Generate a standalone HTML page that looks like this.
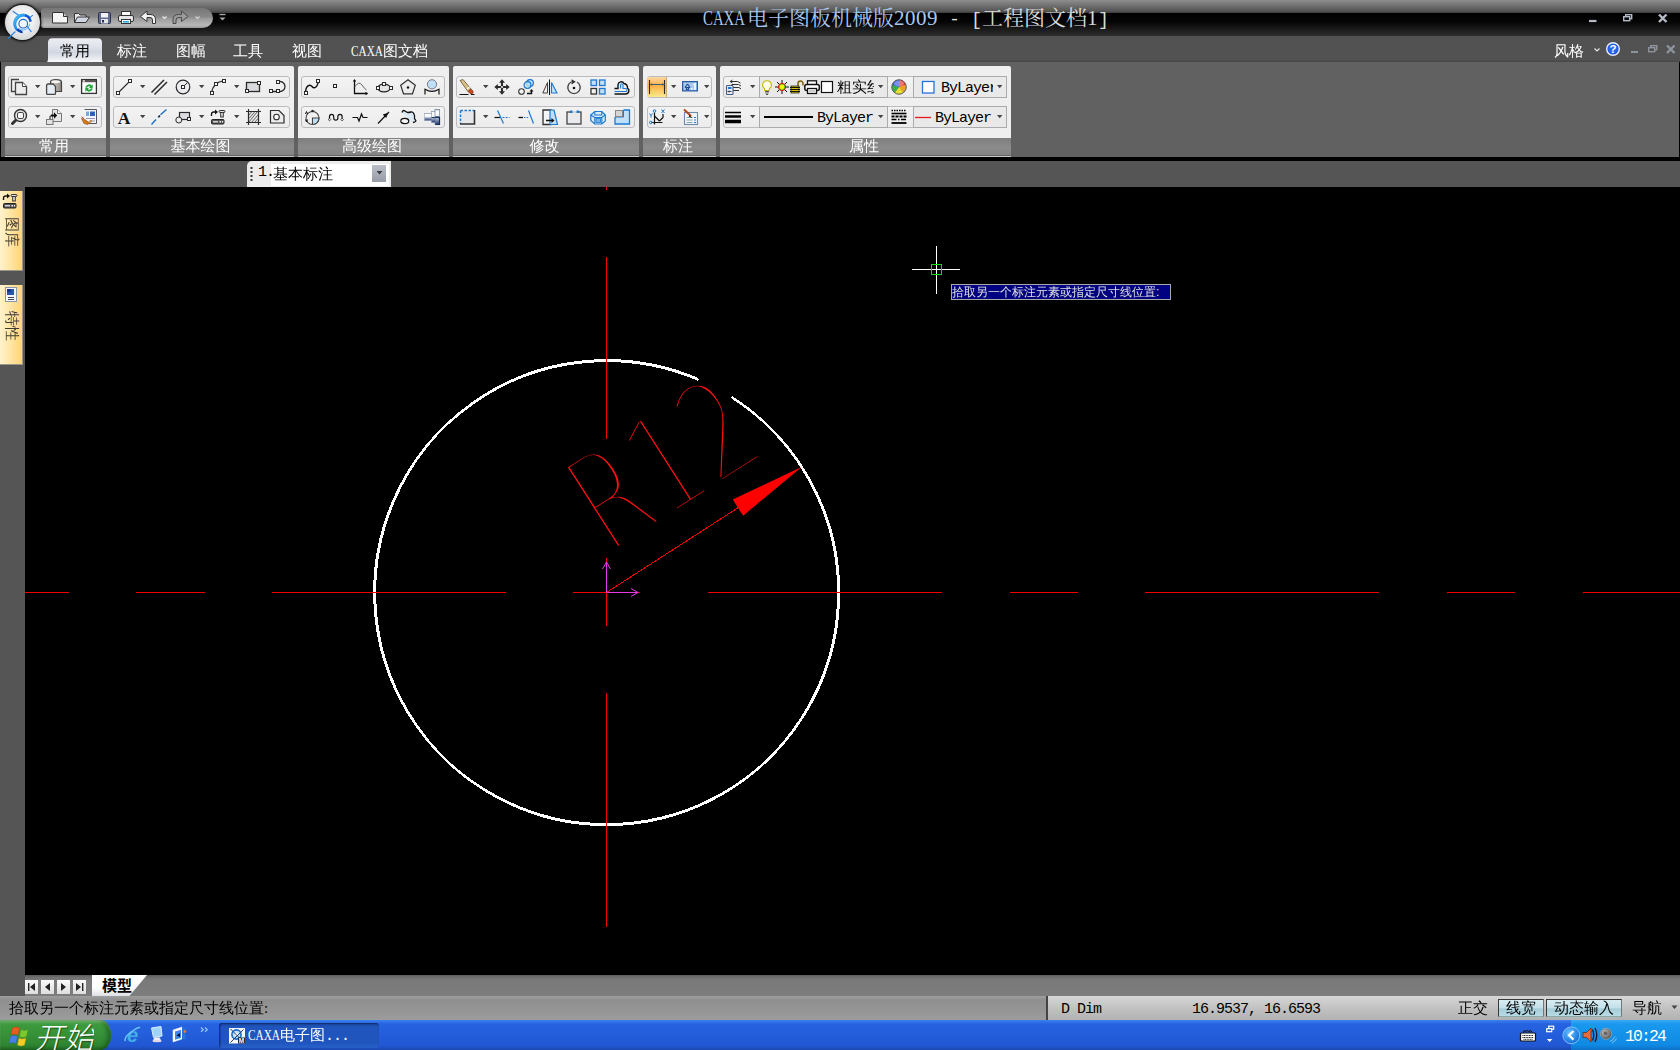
<!DOCTYPE html>
<html lang="zh-CN">
<head>
<meta charset="utf-8">
<title>CAXA电子图板机械版2009 - [工程图文档1]</title>
<style>
html,body{margin:0;padding:0;background:#555;}
body{width:1680px;height:1050px;position:relative;overflow:hidden;font-family:"Liberation Serif","WenQuanYi Zen Hei",serif;font-size:15px;color:#000;}
.abs{position:absolute;}
div,span,svg{box-sizing:border-box;}
svg{position:absolute;overflow:visible;}
/* ---------- title bar ---------- */
#title{left:0;top:0;width:1680px;height:36px;background:linear-gradient(#000,#000 13px,#050505 22px,#2e2e2e 36px);}
#titletop{left:0;top:0;width:1680px;height:13px;background:linear-gradient(#8e8e8e,#6e6e6e 6px,#555 11px,#3a3a3a 13px);}
#ttext{left:703px;top:5px;height:26px;line-height:26px;font-size:21px;white-space:nowrap;font-family:"Liberation Serif","Noto Serif CJK SC",serif;color:#a9c6ee;}
#ttext .l{font-family:"Liberation Mono",monospace;font-size:18.33px;}
#ttext .d{letter-spacing:.5px;}
#ttext .w{color:#dcdcdc;}
/* ---------- menu bar ---------- */
#menu{left:0;top:36px;width:1680px;height:26px;background:linear-gradient(#515151,#525252 24px,#484848 25px);}
.mi{top:41px;height:20px;line-height:20px;font-size:15px;color:#fff;white-space:nowrap;}
#tab1{left:47px;top:38px;width:57px;height:25px;border-radius:5px 5px 0 0;background:linear-gradient(#eceef3,#dfe2ea 45%,#d3d7e0 55%,#eef0f4);}
/* ---------- ribbon ---------- */
#ribbon{left:0;top:62px;width:1680px;height:96px;background:#616161;}
#ribline{left:0;top:157px;width:1680px;height:4px;background:#000;}
#ribl{left:0;top:62px;width:1px;height:96px;background:#000;}
#ribr{left:1679px;top:62px;width:1px;height:96px;background:#000;}
.panel{top:66px;height:91px;background:#efefef;border-radius:2px 2px 0 0;overflow:hidden;}
.panel .cap{position:absolute;left:0;right:0;top:72px;height:19px;background:linear-gradient(#7e7e7e,#8b8b8b 9px,#838383 17px,#666 17px,#666 18px,#c6c6c6 18px);color:#fff;font-size:15px;line-height:17px;text-align:center;padding-right:3px;}
.grp{height:22px;border:1px solid #babcc0;border-radius:3px;background:linear-gradient(#f3f3f3,#ececec);}
/* ---------- toolbar strip ---------- */
#strip{left:0;top:161px;width:1680px;height:26px;background:#555;}
#side{left:0;top:187px;width:25px;height:809px;background:#555;}
#canvas{left:25px;top:187px;width:1655px;height:788px;background:#000;}
/* ---------- bottom ---------- */
#tabs{left:25px;top:975px;width:1655px;height:21px;background:linear-gradient(#5a5a5a,#6e6e6e 2px,#797979 5px,#7d7d7d);}
#status{left:0;top:996px;width:1680px;height:24px;background:linear-gradient(#9e9e9e,#8f8f8f 4px,#939393 12px,#9c9c9c);}
#taskbar{left:0;top:1020px;width:1680px;height:30px;background:linear-gradient(#3c81f0,#2663e0 4px,#245edb 14px,#2157d2 26px,#1b48b0);}

/* bottom items */
.nb{top:980px;width:13px;height:14px;background:linear-gradient(#fafafa,#dedede);}
#mtab{left:92px;top:975px;width:55px;height:21px;background:linear-gradient(#fff,#fff 60%,#dcdfe6);clip-path:polygon(0 0,100% 0,68% 100%,0 100%);}
#mtabt{left:102px;top:976px;font-size:15px;line-height:20px;font-weight:bold;color:#000;font-family:"Liberation Sans","Noto Sans CJK SC",sans-serif;}
#stmsg{left:9px;top:998px;font-size:15px;line-height:20px;color:#000;white-space:nowrap;}
#stright{left:1046px;top:996px;width:634px;height:24px;background:linear-gradient(#d6d6d6,#c2c2c2 50%,#b2b2b2);border-left:2px solid #444;}
.st{top:998px;font-size:15px;line-height:20px;color:#000;white-space:nowrap;}
.sbtn{top:999px;height:18px;border:1px solid #3a3a3a;border-right-color:#777;border-bottom-color:#8aa;background:linear-gradient(#d8ecf2,#c4e0ea 50%,#a4ccd8 55%,#b8dce6);}
#start{left:0;top:1020px;width:111px;height:30px;border-radius:0 10px 10px 0/0 15px 15px 0;background:linear-gradient(#5db45c,#3c9a3c 18%,#358f36 55%,#2f8530 85%,#246c26);box-shadow:inset -3px 0 5px rgba(0,40,0,.45), inset 0 2px 2px rgba(255,255,255,.25);}
#startt{left:34px;top:1020px;height:30px;overflow:hidden;font-size:30px;line-height:37px;color:#fff;font-style:italic;font-family:"Liberation Sans","Noto Sans CJK SC",sans-serif;font-weight:300;text-shadow:1px 1px 1px rgba(0,40,0,.55);white-space:nowrap;}
#tbtn{left:219px;top:1023px;width:160px;height:25px;border-radius:3px;background:linear-gradient(#1d4fae,#1f55bd 20%,#1f55bd 80%,#2a62cc);box-shadow:inset 1px 1px 2px rgba(0,0,30,.55);}
#tbtnt{left:248px;top:1025px;font-size:15px;line-height:20px;color:#fff;white-space:nowrap;}
#tray{left:1571px;top:1020px;width:109px;height:30px;background:linear-gradient(#3aaaf4,#1a98ee 4px,#1392ea 14px,#108ae4 25px,#0c70c8);}
#clock{left:1625px;top:1027px;font-size:16.5px;line-height:20px;color:#fff;white-space:nowrap;font-family:"Liberation Mono",monospace;letter-spacing:-1.9px;}

/* combo + side tabs */
#combo{left:247px;top:161px;width:144px;height:26px;background:#ececec;border-radius:5px 0 0 0;}
#combow{left:271px;top:164px;width:118px;height:22px;background:#fff;}
#combob{left:372px;top:165px;width:14px;height:17px;background:linear-gradient(#b9bdc6,#a9adb7 50%,#989ca7);}
.ct{top:164px;font-size:15px;line-height:20px;color:#000;white-space:nowrap;}
.stab{left:0;width:23px;height:80px;background:linear-gradient(90deg,#fff2cc,#ffe6a6 45%,#ffd37c);border-right:1px solid #9a958a;border-bottom:1px solid #9a958a;}
.stt{font-size:15px;line-height:15px;height:15px;color:#3e3c32;white-space:nowrap;transform-origin:0 0;transform:rotate(90deg);}

/* top items */
#qat{left:41px;top:8px;width:172px;height:20px;border-radius:3px 10px 10px 3px/3px 10px 10px 3px;background:linear-gradient(#767676,#8a8a8a 46%,#9e9e9e 54%,#b8b8b8 86%,#989898);}
#appbtn{left:4.500px;top:4.800px;width:35px;height:35px;border-radius:50%;background:radial-gradient(circle at 50% 42%,#fdfdfd,#f0f0f2 40%,#d9dadc 70%,#b4b6ba 92%,#8d9096);box-shadow:0 0 0 1.200px #1c1c1c,0 0 3px 1px #000;}

.cmb{height:22px;border:1px solid #a9abae;background:#e9e9e9;}
.cbt{font-size:15px;line-height:20px;height:20px;color:#000;white-space:nowrap;font-family:"Liberation Serif","WenQuanYi Zen Hei",serif;}
.sq{display:inline-block;transform-origin:0 50%;transform:scaleX(.706);white-space:nowrap;vertical-align:top;}
.mo{font-family:"Liberation Mono",monospace;font-size:15px;letter-spacing:-1px;}
</style>
</head>
<body>
<!-- TITLE BAR -->
<div id="title" class="abs"></div>
<div id="titletop" class="abs"></div>
<div id="ttext" class="abs"><span class="sq" style="width:44px">CAXA</span>电子图板机械版<span class="d">2009</span><span class="w"><span class="l"> - [</span>工程图文档<span class="d">1</span><span class="l">]</span></span></div>

<div id="qat" class="abs"></div>

<svg class="abs" style="left:41px;top:8px" width="190" height="20" viewBox="41 8 190 20">
<!-- new -->
<path d="M52.5 12.5h11l4 4v6.5h-15z" fill="#f4f4f4" stroke="#333" stroke-width="1"/><path d="M63.5 12.5v4h4" fill="#ccc" stroke="#333" stroke-width="1"/>
<!-- open -->
<path d="M74.5 22.5v-9h4l1.5 1.5h6v2" fill="#e8e8e8" stroke="#333" stroke-width="1"/><path d="M74.5 22.5l3-5.5h12l-3.5 5.5z" fill="#cfd6e2" stroke="#333" stroke-width="1"/>
<!-- save -->
<rect x="98.500" y="12.500" width="12" height="11" rx="1" fill="#636c8e" stroke="#2e3450" stroke-width="1"/><rect x="101" y="13" width="7" height="4.500" fill="#f2f2f2"/><rect x="101" y="19" width="7" height="4.500" fill="#dfe3ea"/><rect x="102" y="20" width="2" height="2.500" fill="#2a3350"/>
<!-- print -->
<rect x="121.500" y="11.500" width="9" height="4" fill="#fafafa" stroke="#333"/><rect x="118.500" y="15.500" width="15" height="6" rx="1.500" fill="#e6e6e6" stroke="#333"/><rect x="121.500" y="19.500" width="9" height="4" fill="#fff" stroke="#333"/><rect x="123" y="21" width="6" height="1.600" fill="#28a8e8"/>
<!-- undo -->
<path d="M140.500 16.500l6.500-5.500v3.500h3q5.500 0 5.500 5v4h-3v-3.500q0-2.500-2.500-2.500h-3v4z" fill="#f2f2f2" stroke="#333" stroke-width="1" stroke-linejoin="round"/>
<path d="M162.500 16.500l2 2l2-2" fill="none" stroke="#e8e8e8" stroke-width="1.200"/>
<!-- redo -->
<path d="M188 16.500l-6.500-5.500v3.500h-3q-5.500 0-5.500 5v4h3v-3.500q0-2.500 2.500-2.500h3v4z" fill="#9a9a9a" stroke="#4a4a4a" stroke-width="1" stroke-linejoin="round"/>
<path d="M195.500 16.500l2 2l2-2" fill="none" stroke="#d0d0d0" stroke-width="1.200"/>
<!-- customize -->
<path d="M219.500 14.500h6" stroke="#a8a8a8" stroke-width="1.400"/><path d="M219.500 17.500h6l-3 3z" fill="#a8a8a8"/>
</svg>
<!-- window buttons -->
<svg class="abs" style="left:1580px;top:10px" width="100" height="16" viewBox="1580 10 100 16"><g fill="none" stroke="#b4bac6">
<path d="M1589 21h7.500" stroke-width="2.200"/>
<rect x="1625.700" y="14.700" width="6" height="4" stroke-width="1.400"/><rect x="1623.700" y="16.700" width="6" height="4" stroke-width="1.400" fill="#0a0a0a"/>
<path d="M1659 14.500l7.500 7.500M1666.500 14.500l-7.500 7.500" stroke-width="2.400"/></g></svg>

<!-- MENU BAR -->
<div id="menu" class="abs"></div>
<svg class="abs" style="left:44px;top:36px" width="64" height="28" viewBox="44 36 64 28"><defs><linearGradient id="tg" x1="0" y1="0" x2="0" y2="1"><stop offset="0" stop-color="#eceef3"/><stop offset=".3" stop-color="#e2e5ec"/><stop offset=".58" stop-color="#d1d6e1"/><stop offset=".8" stop-color="#e6e8ee"/><stop offset="1" stop-color="#fbfbfd"/></linearGradient></defs><path d="M46 62.400Q48 62 48 59.500V42.500Q48 38.200 52.500 38.200H97.500Q102 38.200 102 42.500V59.500Q102 62 104 62.400z" fill="url(#tg)"/></svg>
<div class="abs mi" style="left:60px;color:#000">常用</div>
<div class="abs mi" style="left:117px">标注</div>
<div class="abs mi" style="left:176px">图幅</div>
<div class="abs mi" style="left:233px">工具</div>
<div class="abs mi" style="left:292px">视图</div>
<div class="abs mi" style="left:351px"><span class="sq" style="width:32px;transform:scaleX(.753)">CAXA</span>图文档</div>
<div class="abs mi" style="left:1554px">风格</div>

<div id="appbtn" class="abs"></div>
<svg class="abs" style="left:0;top:0" width="46" height="46" viewBox="0 0 46 46"><defs><linearGradient id="lg1" x1="0" y1="0" x2="1" y2="1"><stop offset="0" stop-color="#5ccaf8"/><stop offset=".5" stop-color="#1f86e6"/><stop offset="1" stop-color="#0a3fb0"/></linearGradient></defs>
<g fill="none" stroke="#2a88e2" stroke-width="1.200" stroke-linecap="round"><path d="M13.200 11.400L18.900 15.400M32.500 15.400L29 18.400M27.200 26.300L31.100 31.600M15.200 31.800L8.300 38.200"/></g>
<path d="M30.500 17.200A9.800 9.800 0 1 0 22.500 33.200Q21.500 31.800 19.500 30.800A7.200 7.200 0 0 1 28.500 18.200z" fill="url(#lg1)"/>
<path d="M25 14.500Q30.500 15 31.800 21.500L29.300 22Q28.800 17.500 25 16.500z" fill="#1457c8"/>
<path d="M16.500 29Q18.500 32.500 22.800 33.200L22.300 30.800Q19.500 30.500 18.500 28.500z" fill="#0b3aa6"/>
<circle cx="23.200" cy="23.700" r="4.300" fill="#f4f6fa" stroke="#1a66cc" stroke-width="1.100"/><circle cx="23.200" cy="23.700" r="6.300" fill="none" stroke="#49a6f0" stroke-width=".9" stroke-dasharray="14 26"/></svg>
<svg class="abs" style="left:1590px;top:40px" width="90" height="18" viewBox="1590 40 90 18">
<path d="M1594.500 48.500l2.500 2.500l2.500-2.500" fill="none" stroke="#e8e8e8" stroke-width="1.200"/>
<circle cx="1613" cy="49" r="6.300" fill="#1f55d8" stroke="#e6eeff" stroke-width="1.400"/><circle cx="1613" cy="49" r="4.600" fill="#2f6cf0" opacity=".6"/>
<text x="1613" y="53.300" text-anchor="middle" font-family="'Liberation Sans',sans-serif" font-weight="bold" font-size="11.500" fill="#fff">?</text>
<g fill="none" stroke="#8e949e"><path d="M1631 52h7" stroke-width="2"/>
<rect x="1650.700" y="45.700" width="6" height="4" stroke-width="1.400"/><rect x="1648.700" y="47.700" width="6" height="4" stroke-width="1.400" fill="#4f4f4f"/>
<path d="M1667 45.500l7.500 7.500M1674.500 45.500l-7.500 7.500" stroke-width="2.400"/></g></svg>
<!-- RIBBON -->
<div id="ribbon" class="abs"></div>
<div id="ribline" class="abs"></div><div id="ribl" class="abs"></div><div id="ribr" class="abs"></div>
<div class="abs panel" style="left:5px;width:101px"><div class="cap">常用</div></div>
<div class="abs panel" style="left:110px;width:184px"><div class="cap">基本绘图</div></div>
<div class="abs panel" style="left:298px;width:151px"><div class="cap">高级绘图</div></div>
<div class="abs panel" style="left:453px;width:186px"><div class="cap">修改</div></div>
<div class="abs panel" style="left:643px;width:73px"><div class="cap">标注</div></div>
<div class="abs panel" style="left:720px;width:291px"><div class="cap">属性</div></div>
<div class="abs grp" style="left:8px;top:76px;width:94px"></div>
<div class="abs grp" style="left:8px;top:106px;width:94px"></div>
<div class="abs grp" style="left:113px;top:76px;width:177px"></div>
<div class="abs grp" style="left:113px;top:106px;width:177px"></div>
<div class="abs grp" style="left:301px;top:76px;width:144px"></div>
<div class="abs grp" style="left:301px;top:106px;width:144px"></div>
<div class="abs grp" style="left:456px;top:76px;width:179px"></div>
<div class="abs grp" style="left:456px;top:106px;width:179px"></div>
<div class="abs grp" style="left:647px;top:76px;width:65px"></div>
<div class="abs grp" style="left:647px;top:106px;width:65px"></div>
<div class="abs grp" style="left:723px;top:76px;width:284px"></div>
<div class="abs cmb" style="left:759px;top:76px;width:129px"></div>
<div class="abs cmb" style="left:913px;top:76px;width:94px"></div>
<div class="abs grp" style="left:723px;top:106px;width:284px"></div>
<div class="abs cmb" style="left:759px;top:106px;width:129px"></div>
<div class="abs cmb" style="left:913px;top:106px;width:94px"></div>
<div class="abs" style="left:647px;top:77px;width:20px;height:20px;background:linear-gradient(#fcd7a4,#fbb650 38%,#fbb142 45%,#fcd070 75%,#fde890);border-right:1px solid #c9a86c;border-radius:2px 0 0 2px"></div>
<svg class="abs" style="left:0;top:62px" width="1020" height="96" viewBox="0 62 1020 96"><g transform="translate(11,79)"><path d="M4 12.500h-3.500v-12h7.500" fill="none" stroke="#444" stroke-width="1.300"/><path d="M4.500 3.500h7l4 4v8h-11z" fill="#ededed" stroke="#444" stroke-width="1.300"/><path d="M11.500 3.500v4h4" fill="#fafafa" stroke="#444" stroke-width="1"/></g><path d="M35 85h5.400l-2.700 3.200z" fill="#444"/><g transform="translate(46,79)"><defs><linearGradient id="cy" x1="0" y1="0" x2="1" y2="0"><stop offset="0" stop-color="#e4e0dc"/><stop offset="1" stop-color="#8c8680"/></linearGradient></defs><path d="M4.500 2.800a5.500 2.300 0 0 1 11 0v9.700h-11z" fill="url(#cy)" stroke="#444" stroke-width="1.200"/><ellipse cx="10" cy="2.800" rx="4.300" ry="1.300" fill="#f4f4f4"/><path d="M0.600 6.500q0-1.500 1.500-1.500h5l2.400 2.400v7q0 1-1 1h-6.900q-1 0-1-1z" fill="#e6ecf4" stroke="#444" stroke-width="1.300"/></g><path d="M70 85h5.400l-2.700 3.200z" fill="#444"/><g transform="translate(81,79)"><rect x="0.600" y="0.600" width="14.800" height="13.800" fill="#fff" stroke="#333" stroke-width="1.300"/><rect x="1" y="1" width="14" height="2.200" fill="#5a5656"/><rect x="1.800" y="1.300" width="2" height="1.400" fill="#fff"/><path d="M4.300 8.700a3.700 3.700 0 0 1 6.200-2.300l1.200-1.200v3.800h-3.800l1.300-1.300a2 2 0 0 0-3.100 1z" fill="#1ea83c"/><path d="M11.700 9.300a3.700 3.700 0 0 1-6.200 2.300l-1.200 1.200v-3.800h3.800l-1.300 1.300a2 2 0 0 0 3.100-1z" fill="#1ea83c"/></g><g transform="translate(11,109)"><path d="M5.500 10.500l-4 4" stroke="#333" stroke-width="3" stroke-linecap="round"/><circle cx="9.500" cy="6.500" r="6" fill="#e4e4e4" stroke="#333" stroke-width="1.400"/><rect x="6.500" y="3.500" width="6" height="6" rx="1.500" fill="#fafafa" stroke="#444"/></g><path d="M35 115h5.400l-2.700 3.200z" fill="#444"/><g transform="translate(46,109)"><path d="M6.500 0.500h5l4 4v8h-9z" fill="#e6e6e6" stroke="#777"/><path d="M11.500 0.500v4h4" fill="#fafafa" stroke="#777"/><path d="M5 5.500h3v-2.200l3.200 3.200l-3.200 3.200v-2.200h-3z" fill="#111"/><path d="M4 10v-2q0-1.500 1.500-1.500" fill="none" stroke="#111" stroke-width="1"/><rect x="0.500" y="10.500" width="6.500" height="5" fill="#e2e2e2" stroke="#777"/></g><path d="M70 115h5.400l-2.700 3.200z" fill="#444"/><g transform="translate(81,109)"><path d="M3.500 0.500h12v14h-9" fill="#f4f6fa" stroke="#556"/><rect x="9" y="2.500" width="5" height="4.500" fill="#2c62b4"/><rect x="5" y="2.500" width="3" height="4.500" fill="#7fa6dc"/><path d="M5 9.500h9M9 12h5" stroke="#99a" /><path d="M0.500 9.500l4 1.500l4 3l-1.500 1.500l-4-1z" fill="#d9761a" stroke="#8a4a10" stroke-width=".6"/><path d="M7 13.500l3-2.500l1 1.200l-3 2.300z" fill="#f0b060" stroke="#8a4a10" stroke-width=".5"/><path d="M0.500 8l2.500 1.500" stroke="#b33" /></g><g transform="translate(116,79)"><path d="M1.500 14.500L14.500 1.500" stroke="#2b2b2b" stroke-width="1.100"/><rect x="0.5" y="12.5" width="3" height="3" fill="#fafafa" stroke="#2b2b2b" stroke-width="1"/><rect x="12.5" y="0.5" width="3" height="3" fill="#fafafa" stroke="#2b2b2b" stroke-width="1"/></g><path d="M140 85h5.400l-2.700 3.200z" fill="#444"/><g transform="translate(151,79)"><path d="M0.500 13.500L13 1M3.500 15.500L16 3" stroke="#2b2b2b" stroke-width="1.500"/></g><g transform="translate(175,79)"><circle cx="8" cy="8" r="6.800" fill="#ececf0" stroke="#2b2b2b" stroke-width="1.200"/><path d="M8 8l4.500-4.500" stroke="#2b2b2b"/><rect x="6.5" y="6.5" width="3" height="3" fill="#fafafa" stroke="#2b2b2b" stroke-width="1"/></g><path d="M199 85h5.400l-2.700 3.200z" fill="#444"/><g transform="translate(210,79)"><path d="M1.500 14.500Q2.500 3.500 14.500 1.500" fill="none" stroke="#2b2b2b" stroke-width="1.200"/><rect x="0.5" y="12.5" width="3" height="3" fill="#fafafa" stroke="#2b2b2b" stroke-width="1"/><rect x="4.5" y="3.5" width="3" height="3" fill="#fafafa" stroke="#2b2b2b" stroke-width="1"/><rect x="12.5" y="0.5" width="3" height="3" fill="#fafafa" stroke="#2b2b2b" stroke-width="1"/></g><path d="M234 85h5.400l-2.700 3.200z" fill="#444"/><g transform="translate(245,79)"><rect x="1.500" y="3.500" width="13" height="9" fill="#d9dade" stroke="#2b2b2b" stroke-width="1.300"/><rect x="0.5" y="10.5" width="3" height="3" fill="#fafafa" stroke="#2b2b2b" stroke-width="1"/><rect x="12.5" y="2.5" width="3" height="3" fill="#fafafa" stroke="#2b2b2b" stroke-width="1"/></g><g transform="translate(269,79)"><path d="M1.500 12.500h7M8.500 2.500h2.500a5 5 0 0 1 0 10h-2.500" fill="none" stroke="#2b2b2b" stroke-width="1.300"/><rect x="0.5" y="10.5" width="3" height="3" fill="#fafafa" stroke="#2b2b2b" stroke-width="1"/><rect x="7.5" y="10.5" width="3" height="3" fill="#fafafa" stroke="#2b2b2b" stroke-width="1"/><rect x="7.5" y="1.5" width="3" height="3" fill="#fafafa" stroke="#2b2b2b" stroke-width="1"/></g><g transform="translate(116,109)"><text x="8" y="14.500" text-anchor="middle" font-family="'Liberation Serif',serif" font-weight="bold" font-size="17.500" fill="#111">A</text></g><path d="M140 115h5.400l-2.700 3.200z" fill="#444"/><g transform="translate(151,109)"><path d="M0.500 15.500L5 10.500M7 8.500L7.800 7.600M9.500 5.800L15.500 0.500" stroke="#1c6cc0" stroke-width="1.300"/><circle cx="8.300" cy="7.300" r="1" fill="#111"/></g><g transform="translate(175,109)"><rect x="4.500" y="3.500" width="10" height="7" fill="#dcdde2" stroke="#2b2b2b" stroke-width="1.200"/><circle cx="3.800" cy="11" r="3" fill="#ececec" stroke="#2b2b2b"/><rect x="12.5" y="8.5" width="3" height="3" fill="#fafafa" stroke="#2b2b2b" stroke-width="1"/></g><path d="M199 115h5.400l-2.700 3.200z" fill="#444"/><g transform="translate(210,109)"><path d="M1.500 7V5.500Q1.500 3 4 3H5.500" fill="none" stroke="#111" stroke-width="1.400"/><path d="M5 0.500L8 3L5 5.500z" fill="#111"/><rect x="9" y="1.500" width="6" height="2" rx="1" fill="#e4e4e4" stroke="#333"/><rect x="10.700" y="3.500" width="2.600" height="4.500" fill="#e4e4e4" stroke="#333"/><rect x="1.500" y="10.500" width="12.500" height="4.500" rx="1" fill="#555" stroke="#222"/><path d="M3 12.800h5" stroke="#eee" stroke-width="1.200"/><rect x="9.500" y="12" width="1.500" height="1.600" fill="#eee"/><rect x="12" y="12" width="1.200" height="1.600" fill="#eee"/></g><path d="M234 115h5.400l-2.700 3.200z" fill="#444"/><g transform="translate(245,109)"><rect x="3.500" y="2.500" width="10" height="11" fill="#e8e8e8" stroke="none"/><path d="M4 6l3-3.500M4 9.500l6-7M4 13l8.500-10.500M6.500 13.500l6.500-7.500M9.500 13.500l3.500-4" stroke="#555" stroke-width=".9"/><path d="M3.500 0v16M13.500 0v16M1 2.500h15M1 13.500h15" stroke="#2b2b2b" stroke-width="1.200"/></g><g transform="translate(269,109)"><path d="M1.500 1.500h8.500l5 5v7.500h-13.500z" fill="#ececec" stroke="#2b2b2b" stroke-width="1.200"/><circle cx="7.500" cy="8" r="2.800" fill="#fafafa" stroke="#2b2b2b" stroke-width="1.100"/></g><g transform="translate(304,79)"><path d="M1.500 14.500C1.500 6 6 5 8 7.500S13.500 9 14.500 1.500" fill="none" stroke="#111" stroke-width="1.400"/><rect x="0.5" y="12.5" width="3" height="3" fill="#fafafa" stroke="#2b2b2b" stroke-width="1"/><rect x="12.5" y="0.5" width="3" height="3" fill="#fafafa" stroke="#2b2b2b" stroke-width="1"/></g><g transform="translate(328,79)"><rect x="5.500" y="5.500" width="3" height="3" fill="#fafafa" stroke="#222" stroke-width="1"/></g><g transform="translate(352,79)"><path d="M2.500 1v13.500h13" fill="none" stroke="#111" stroke-width="1.300"/><path d="M2.500 0l-1.700 2.500h3.400zM16 14.500l-2.500-1.700v3.400zM1 14.500h1.500" fill="#111"/><path d="M2.500 8Q7 1.500 10 6T14.500 11" fill="none" stroke="#555" stroke-width=".9"/></g><g transform="translate(376,79)"><ellipse cx="8" cy="9" rx="6.300" ry="3.900" fill="#e4e4e8" stroke="#222" stroke-width="1.200"/><rect x="0.5" y="7.5" width="3" height="3" fill="#fafafa" stroke="#2b2b2b" stroke-width="1"/><rect x="13.5" y="7.5" width="3" height="3" fill="#fafafa" stroke="#2b2b2b" stroke-width="1"/><rect x="6.5" y="3.5" width="3" height="3" fill="#fafafa" stroke="#2b2b2b" stroke-width="1"/></g><g transform="translate(400,79)"><path d="M8 0.800L15.300 6.200L12.500 14.800H3.500L0.700 6.200z" fill="#ececec" stroke="#333" stroke-width="1.200"/><circle cx="8" cy="8.500" r="1.200" fill="#111"/></g><g transform="translate(424,79)"><circle cx="8" cy="5.300" r="4.600" fill="#bfe0f6" stroke="#778" stroke-width="1"/><path d="M1 15.500v-5.300Q8 14.500 15 10.200v5.300" fill="none" stroke="#111" stroke-width="1.200"/></g><g transform="translate(304,109)"><circle cx="8.500" cy="9" r="6.500" fill="#f0f0f0" stroke="#444" stroke-width="1.100"/><path d="M8.500 9h6.500a6.500 6.500 0 0 1-6.500 6.500z" fill="#bfe0f6" stroke="#444" stroke-width="1.100"/><path d="M7.500 2h3M7.500 2l1.500-1M7.500 2l1.500 1M1.500 5l1-2.500l1 2.500M1.500 10.500l1 2.500l1-2.500" fill="none" stroke="#111" stroke-width="1"/></g><g transform="translate(328,109)"><path d="M1.500 10V7.500a2.100 2.100 0 0 1 4.200 0v1.500a2.100 2.100 0 0 0 4.200 0V7.500a2.100 2.100 0 0 1 4.200 0V10" fill="none" stroke="#111" stroke-width="1.200"/><path d="M1.500 9.300l1.300 1.300l-1.300 1.300l-1.300-1.300zM14.100 9.300l1.300 1.300l-1.300 1.300l-1.300-1.300z" fill="#f4f4f4" stroke="#111" stroke-width=".7"/></g><g transform="translate(352,109)"><path d="M0.500 8.500h5l1.500 3.500l2.500-7l1.500 3.500h4.500" fill="none" stroke="#111" stroke-width="1.200"/></g><g transform="translate(376,109)"><path d="M2 14.500L13 3" stroke="#111" stroke-width="1.200"/><path d="M12.200 3.800l-2 5.200l-3.400-3.400z" fill="#111"/></g><g transform="translate(400,109)"><path d="M2 3.500Q3 0.500 5 2T8 3.500T11 3T14 5T14.500 8.500T15.500 11T13 13.500" fill="#dbeaf4" stroke="#111" stroke-width="1.300"/><ellipse cx="4.800" cy="12" rx="4" ry="2.600" fill="#f6f6f6" stroke="#111" stroke-width="1.200"/></g><g transform="translate(424,109)"><defs><linearGradient id="sg" x1="0" y1="0" x2="0" y2="1"><stop offset="0" stop-color="#9aa8c0"/><stop offset=".1" stop-color="#ffffff"/><stop offset=".46" stop-color="#f4f6fa"/><stop offset=".47" stop-color="#1c3464"/><stop offset=".56" stop-color="#1c3464"/><stop offset=".57" stop-color="#b4c0d4"/><stop offset="1" stop-color="#20386c"/></linearGradient></defs><rect x="0.500" y="4.500" width="7.500" height="7" fill="url(#sg)" stroke="#8a98b0" stroke-width=".5"/><rect x="7.500" y="2.500" width="4" height="11" fill="url(#sg)" stroke="#7a88a4" stroke-width=".5"/><rect x="11" y="0.500" width="4.500" height="15" fill="url(#sg)" stroke="#5a6c90" stroke-width=".6"/><path d="M15.500 8v7.500h-4" fill="none" stroke="#14285a" stroke-width="1.200"/></g><g transform="translate(459,79)"><path d="M1 1.500l3-1l8 9.500l-3 2.500z" fill="#d8c088" stroke="#6a5530" stroke-width=".8"/><path d="M9 12.500l3-2.500l2 2a2 2 0 0 1-3 2.500z" fill="#d04818" stroke="#7a2a10" stroke-width=".6"/><path d="M8 10l2.500-2" stroke="#fff" stroke-width="1.200"/><path d="M0.500 15.500h9M12 15.500h3.500" stroke="#111" stroke-width="1.100"/></g><path d="M483 85h5.400l-2.700 3.200z" fill="#444"/><g transform="translate(494,79)"><path d="M8 0.300l3 3.500h-2v3.200h3.200v-2l3.500 3l-3.500 3v-2h-3.200v3.200h2l-3 3.500l-3-3.500h2v-3.200h-3.200v2l-3.500-3l3.500-3v2h3.200v-3.200h-2z" fill="#2a2a2a"/><circle cx="8" cy="8" r="1.500" fill="#f4f4f4" stroke="#2a2a2a" stroke-width=".9"/></g><g transform="translate(518,79)"><circle cx="12" cy="4" r="3.400" fill="#bfe0f6" stroke="#1e78d2" stroke-width="1.200"/><circle cx="9.500" cy="6" r="3.400" fill="#bfe0f6" stroke="#1e78d2" stroke-width="1.200" fill-opacity=".8"/><circle cx="3.500" cy="12.500" r="2.800" fill="#f4f4f4" stroke="#333" stroke-width="1.100"/><path d="M9 14.500h4.500v-2.500" fill="none" stroke="#111" stroke-width="1.400"/><path d="M11.500 12.500l2-2.500l2 2.500z" fill="#111"/></g><g transform="translate(542,79)"><path d="M7.500 0.500v15.500" stroke="#111" stroke-width="1"/><path d="M5.500 3.500v10.500h-4.700z" fill="#eee" stroke="#444" stroke-width="1"/><path d="M9.500 3.500v10.500h5.500z" fill="#bfe0f6" stroke="#1e78d2" stroke-width="1.100"/></g><g transform="translate(566,79)"><path d="M5 3A6.200 6.200 0 1 0 11 3" fill="none" stroke="#444" stroke-width="1.400"/><path d="M5.500 0.200l4.300 2.600l-4.300 2.800z" fill="#333"/><circle cx="8" cy="9" r="1.300" fill="#111"/></g><g transform="translate(590,79)"><rect x="1" y="1" width="5.500" height="5.500" fill="#bfe0f6" stroke="#1e78d2" stroke-width="1.300"/><rect x="9.500" y="1" width="5.500" height="5.500" fill="#bfe0f6" stroke="#1e78d2" stroke-width="1.300"/><rect x="1" y="9.500" width="5.500" height="5.500" fill="#f2f2f2" stroke="#333" stroke-width="1.300"/><rect x="9.500" y="9.500" width="5.500" height="5.500" fill="#bfe0f6" stroke="#1e78d2" stroke-width="1.300"/></g><g transform="translate(614,79)"><path d="M0.500 15h11.500a3.300 3.300 0 0 0 1.500-6a4 4 0 0 0-3.500-4.500a3.200 3.200 0 0 0-6 1v4h-3.500" fill="none" stroke="#111" stroke-width="1.400"/><path d="M0.500 12.500h11a1.500 1.500 0 0 0 0-3h-2.500v-3.500a1.200 1.200 0 0 0-2.400 0v3.500" fill="none" stroke="#1e78d2" stroke-width="1.100"/></g><g transform="translate(459,109)"><rect x="1.500" y="1.500" width="13.500" height="13.500" fill="#e6e7ea" stroke="none"/><path d="M1.500 1.500h13.500" stroke="#1e78d2" stroke-width="1.500" stroke-dasharray="2.500 1.500"/><path d="M1.500 1.500v13.500" stroke="#1e78d2" stroke-width="1.500" stroke-dasharray="2.500 1.500"/><path d="M1 15h14.500v-14" fill="none" stroke="#333" stroke-width="1.600"/></g><path d="M483 115h5.400l-2.700 3.200z" fill="#444"/><g transform="translate(494,109)"><path d="M0.500 8.500h5.500" stroke="#111" stroke-width="1.200"/><path d="M3.500 1.500l6 13" stroke="#1e78d2" stroke-width="1.200"/><path d="M8.500 8.500h7" stroke="#1e78d2" stroke-width="1.200" stroke-dasharray="2 1.200"/></g><g transform="translate(518,109)"><path d="M0.500 8.500h4.500" stroke="#111" stroke-width="1.300"/><path d="M6 8.500h5" stroke="#1e78d2" stroke-width="1.200" stroke-dasharray="1.500 1.200"/><path d="M10.500 1.500l5 13" stroke="#1e78d2" stroke-width="1.200"/></g><g transform="translate(542,109)"><path d="M1 1h8v14.500h-8z" fill="#f4f4f4" stroke="#333" stroke-width="1.300"/><path d="M8 1h4l3.500 14.500h-7.500z" fill="#bfe0f6" stroke="#1e78d2" stroke-width="1.200"/><path d="M4 11.500h6" stroke="#111" stroke-width="1.500"/><path d="M9.500 9l3 2.500l-3 2.500z" fill="#111"/></g><g transform="translate(566,109)"><rect x="1" y="3" width="14" height="12" fill="#e9eaee" stroke="#444" stroke-width="1.300"/><rect x="4" y="1.500" width="2.500" height="2.500" fill="#1e78d2"/><rect x="10.500" y="1.500" width="2.500" height="2.500" fill="#1e78d2"/><path d="M6.500 3h4" stroke="#e9eaee" stroke-width="1.600"/></g><g transform="translate(590,109)"><path d="M0.800 6l4-3.500h7l3.500 3.500v6l-3.500 3h-7l-4-3.500z" fill="#d8ecf8" stroke="#1e78d2" stroke-width="1.200"/><path d="M0.800 6l4 2.500v6M4.800 8.500h7l3.500-2.500M11.800 8.500v6.500M4.800 2.500v3.500h7v-3.500" fill="none" stroke="#1e78d2" stroke-width="1.100"/><rect x="6" y="9.500" width="4.500" height="4" fill="#7ab4e4" stroke="#1e78d2" stroke-width=".8"/></g><g transform="translate(614,109)"><path d="M1 8v7h14.500v-14h-6" fill="#bfe0f6" stroke="#1e78d2" stroke-width="1.300"/><path d="M9.500 8v-7M1 8h8.500" stroke="#1e78d2" stroke-width="1"/><rect x="1.500" y="1.500" width="7" height="6" fill="#d4d4d4" stroke="#888" stroke-width="1"/></g><g transform="translate(649,79)"><path d="M0.500 1v14M15.500 1v14" stroke="#2a2a2a" stroke-width="1.100"/><path d="M1 5.500h14.500" stroke="#3c6470" stroke-width="1"/><path d="M2.800 4.300v2.400M13.700 4.300v2.400" stroke="#3c6470" stroke-width=".9"/></g><path d="M671 85h5.400l-2.700 3.200z" fill="#444"/><g transform="translate(682,79)"><rect x="0.500" y="2.500" width="15" height="9.500" fill="#5a8fd0" stroke="#2c5aa0" stroke-width="1"/><rect x="1.500" y="3.500" width="13" height="7.500" fill="#a9c8ec"/><path d="M3 8.500h5M5.500 5l-2.500 3.500M5.500 5l2.500 3.500M4.500 8.500v2h2v-2" stroke="#1c4a94" fill="none" stroke-width="1.100"/><rect x="9" y="9" width="1.500" height="1.500" fill="#fff"/><path d="M11.500 6l1.500-1v6" stroke="#fff" fill="none" stroke-width="1.500"/></g><path d="M704 85h5.400l-2.700 3.200z" fill="#444"/><g transform="translate(649,109)"><path d="M5.500 3.500v12M2.500 13.500h11M5.500 7l5 5M10.500 12l3.500-3.500v-3.500" fill="none" stroke="#111" stroke-width="1.200"/><g fill="none" stroke="#1e78d2" stroke-width="1"><circle cx="5.500" cy="2" r="1.300"/><circle cx="1.800" cy="13.500" r="1.300"/><path d="M12.500 0.500l3 3.500M15.500 0.500l-3 3.500M0.500 4.500l1.500 2l1.500-2M2 6.500v2"/></g></g><path d="M671 115h5.400l-2.700 3.200z" fill="#444"/><g transform="translate(683,109)"><rect x="1.500" y="3.500" width="13" height="12" fill="#f2f5fa" stroke="#6f88ad" stroke-width="1.100"/><path d="M3.500 8.500h6M3.500 11h6M3.500 13.500h6" stroke="#8aa" stroke-width="1"/><path d="M11 8.500h2M11 11h2M11 13.500h2" stroke="#1e78d2" stroke-width="1.200"/><path d="M1 0.500l7 6.500" stroke="#b04818" stroke-width="2"/><path d="M6.500 5.500l3 3.500l-3.800-1.200z" fill="#4a3020"/></g><path d="M704 115h5.400l-2.700 3.200z" fill="#444"/><g transform="translate(726,79)"><path d="M4.500 2.500h7l3 1.500M5.500 5.500h7l2.500 1.500M6.500 8.500h6.500l2 1.500M6.500 11.500h6.500" fill="none" stroke="#333" stroke-width="1"/><path d="M6.500 1l-2.500 1.500l2.500 1.500" fill="none" stroke="#333" stroke-width=".9"/><rect x="0.500" y="6.500" width="6.500" height="9" rx="0.800" fill="#e9eef6" stroke="#445a80" stroke-width="1.100"/><rect x="2" y="8" width="3.500" height="2" fill="#1e78d2"/><path d="M2 12.500h3.500M3 11.500l-1 1l1 1" fill="none" stroke="#334" stroke-width=".9"/></g><path d="M750 85h5.400l-2.700 3.200z" fill="#444"/><g transform="translate(762,80)"><path d="M5 0.800a4.200 4.200 0 0 1 2.600 7.600l-0.400 2.100h-4.400l-0.400-2.100A4.200 4.200 0 0 1 5 0.800z" fill="#ffffe8" stroke="#c8b400" stroke-width="1.100"/><path d="M3 11.500h4M3.300 13h3.400M4 14.500h2" stroke="#555" stroke-width="1.100"/></g><g transform="translate(775,80)"><path d="M7 0v14M0 7h14M2 2l10 10M12 2l-10 10" stroke="#111" stroke-width="1"/><circle cx="7" cy="7" r="3.600" fill="#40c820" stroke="#e01010" stroke-width="1"/><circle cx="7" cy="7" r="2.400" fill="#f0f800"/></g><g transform="translate(790,80)"><path d="M8 7v-3.500a2.500 2.500 0 0 1 5 0v2" fill="none" stroke="#806000" stroke-width="1.500"/><rect x="1" y="6" width="8" height="7" fill="#d8c000" stroke="#222" stroke-width=".8"/><path d="M0 7.500h10M0 9.500h10M0 11.500h10" stroke="#111" stroke-width="1"/></g><g transform="translate(804,80)"><rect x="3.500" y="0.800" width="9" height="4" fill="#fff" stroke="#111" stroke-width="1.300"/><rect x="0.800" y="4.500" width="14.500" height="6" rx="2" fill="#fff" stroke="#111" stroke-width="1.500"/><rect x="3.500" y="8.500" width="9" height="5" fill="#fff" stroke="#111" stroke-width="1.300"/><path d="M5 11h6" stroke="#999"/></g><rect x="821.5" y="81.500" width="11" height="11" fill="#fff" stroke="#111" stroke-width="1.200"/><path d="M878 85h5.400l-2.700 3.200z" fill="#444"/><g transform="translate(891,79)"><circle cx="8" cy="8" r="7.600" fill="#888"/><path d="M8 8L8 0.800A7.200 7.200 0 0 1 14.800 5.800z" fill="#e83030"/><path d="M8 8L14.800 5.800A7.200 7.200 0 0 1 12.200 13.800z" fill="#f0a020"/><path d="M8 8L12.200 13.800A7.200 7.200 0 0 1 3.800 13.800z" fill="#e8e030"/><path d="M8 8L3.800 13.800A7.200 7.200 0 0 1 1.200 5.800z" fill="#38b048"/><path d="M8 8L1.200 5.800A7.200 7.200 0 0 1 8 0.800z" fill="#3058d8"/><circle cx="8" cy="8" r="7.200" fill="none" stroke="#666" stroke-width="1"/><ellipse cx="8" cy="4.500" rx="5" ry="3" fill="#fff" opacity=".35"/></g><path d="M997 85h5.400l-2.700 3.200z" fill="#444"/><rect x="922.5" y="81.500" width="11.500" height="11.500" fill="#fff" stroke="#2a72d4" stroke-width="1.300"/><g transform="translate(725,109)"><path d="M0 3.500h16" stroke="#000" stroke-width="1.500"/><path d="M0 7.500h16" stroke="#000" stroke-width="2.500"/><path d="M0 12.500h16" stroke="#000" stroke-width="3.500"/></g><path d="M750 115h5.400l-2.700 3.200z" fill="#444"/><path d="M764 117h49" stroke="#000" stroke-width="2"/><path d="M878 115h5.400l-2.700 3.200z" fill="#444"/><g transform="translate(891,109)"><path d="M0.500 1.500h15" stroke="#000" stroke-width="1.400" stroke-dasharray="1.500 1"/><path d="M0.500 4.500h15" stroke="#000" stroke-width="1.600"/><path d="M0.500 7.500h15" stroke="#000" stroke-width="2" stroke-dasharray="3 1"/><path d="M0.500 10.500h15" stroke="#000" stroke-width="1.400" stroke-dasharray="5 1.500 1.500 1.500"/><path d="M0.500 14h15" stroke="#000" stroke-width="1.800"/></g><path d="M997 115h5.400l-2.700 3.200z" fill="#444"/><path d="M915 117.500h16" stroke="#e81818" stroke-width="1.300"/></svg>
<div class="abs cbt" style="left:837px;top:77px;width:37px;overflow:hidden">粗实线</div>
<div class="abs cbt mo" style="left:941px;top:79px;width:52px;overflow:hidden">ByLayer</div>
<div class="abs cbt mo" style="left:817px;top:109px">ByLayer</div>
<div class="abs cbt mo" style="left:935px;top:109px">ByLayer</div>


<!-- STRIP / SIDE / CANVAS -->
<div id="strip" class="abs"></div>
<div id="side" class="abs"></div>
<div id="canvas" class="abs"></div>
<svg id="draw" class="abs" style="left:0;top:0" width="1680" height="1050" viewBox="0 0 1680 1050">
<g fill="none" stroke="#fff" stroke-width="1" shape-rendering="crispEdges"><path d="M697.9 379.3 A232 232 0 1 0 732.2 397.5"/><path d="M697.9 379.3 A232 232 0 1 0 732.2 397.5" transform="translate(-1,0)"/><path d="M697.9 379.3 A232 232 0 1 0 732.2 397.5" transform="translate(1,0)"/><path d="M697.9 379.3 A232 232 0 1 0 732.2 397.5" transform="translate(0,-1)"/><path d="M697.9 379.3 A232 232 0 1 0 732.2 397.5" transform="translate(0,1)"/></g>
<g stroke="#f00000" stroke-width="1" fill="none" shape-rendering="crispEdges">
<path d="M25 592.5H69 M136 592.5H205 M272 592.5H506 M573 592.5H640 M708 592.5H942 M1010 592.5H1078 M1145 592.5H1379 M1447 592.5H1515 M1583 592.5H1680"/>
<path d="M606.5 187V190 M606.5 257V439 M606.5 558V626 M606.5 693V927"/>
</g>

<line x1="606.5" y1="592.5" x2="760" y2="493.6" stroke="#f00000" stroke-width="1" shape-rendering="crispEdges"/>
<polygon points="802,466.7 743.1,515.7 732.8,499.6" fill="#ff0000"/>
<g transform="translate(619,547) rotate(-32.6) scale(0.72,1)">
<text x="-19" y="1" font-family="'DejaVu Sans Light','DejaVu Sans',sans-serif" font-weight="200" font-size="134.4" fill="#ff1010" stroke="#000" stroke-width="4.8">R12</text>
</g>
<g stroke="#e838e8" stroke-width="1" fill="none">
<path d="M606.5 592.5V562 M602.5 569L606.5 562L610.5 569 M606.5 592.5H638 M631 588.5L638 592.5L631 596.5"/>
</g>
<g shape-rendering="crispEdges" fill="none">
<path d="M912 269.5H960 M936.5 246V294" stroke="#fff" stroke-width="1"/>
<rect x="931.5" y="264.5" width="10" height="10" stroke="#00e000" stroke-width="1"/>
</g>
</svg>
<div class="abs" id="tip" style="left:951px;top:284px;width:220px;height:16px;background:#000080;border:1px solid #a8a8a8;color:#e0e0e0;font-size:12px;line-height:14px;white-space:nowrap;overflow:hidden;font-family:'Liberation Sans','WenQuanYi Zen Hei',sans-serif">拾取另一个标注元素或指定尺寸线位置:</div>
<div id="combo" class="abs"></div><div id="combow" class="abs"></div><div id="combob" class="abs"></div>
<svg class="abs" style="left:250px;top:166px" width="4" height="16" viewBox="0 0 4 16"><g fill="#333"><rect x="0.5" y="1" width="2" height="2"/><rect x="0.5" y="5" width="2" height="2"/><rect x="0.5" y="9" width="2" height="2"/><rect x="0.5" y="13" width="2" height="2"/></g></svg>
<div class="abs ct mo" style="left:258px;top:163px">1.</div><div class="abs ct" style="left:273px">基本标注</div>
<svg class="abs" style="left:376px;top:171px" width="7" height="4" viewBox="0 0 7 4"><path d="M0.5 0h6l-3 3.6z" fill="#3c3c44"/></svg>
<div class="abs stab" style="top:191px"></div>
<div class="abs stab" style="top:285px"></div>
<div class="abs stt" style="left:19px;top:217px">图库</div>
<div class="abs stt" style="left:19px;top:311px">特性</div>
<svg class="abs" style="left:2px;top:193px" width="16" height="16" viewBox="0 0 16 16"><path d="M1.500 7V5.500Q1.500 3 4 3H5.500" fill="none" stroke="#111" stroke-width="1.400"/><path d="M5 0.500L8 3L5 5.500z" fill="#111"/><rect x="9" y="1.500" width="6" height="2" rx="1" fill="#e4e4e4" stroke="#333"/><rect x="10.700" y="3.500" width="2.600" height="4.500" fill="#e4e4e4" stroke="#333"/><rect x="1.500" y="10.500" width="12.500" height="4.500" rx="1" fill="#555" stroke="#222"/><path d="M3 12.800h5" stroke="#eee" stroke-width="1.200"/><rect x="9.500" y="12" width="1.500" height="1.600" fill="#eee"/><rect x="12" y="12" width="1.200" height="1.600" fill="#eee"/></svg>
<svg class="abs" style="left:5px;top:287px" width="12" height="15" viewBox="0 0 12 15"><rect x="0.5" y="0.5" width="11" height="14" fill="#f4f6fa" stroke="#8a97ad"/><rect x="2" y="2" width="7" height="6" fill="#2a58a8"/><rect x="2" y="2" width="4" height="3" fill="#16397c"/><path d="M3 10.5h6M3 12.5h6" stroke="#445" stroke-width="1"/></svg>
<!--DRAWING-->

<!-- BOTTOM -->
<div id="tabs" class="abs"></div>
<div id="status" class="abs"></div>
<div id="taskbar" class="abs"></div>
<div class="abs nb" style="left:25px"></div><div class="abs nb" style="left:41px"></div><div class="abs nb" style="left:57px"></div><div class="abs nb" style="left:73px"></div>
<svg class="abs" style="left:25px;top:980px" width="62" height="14" viewBox="0 0 62 14"><g fill="#222"><rect x="3" y="3" width="1.4" height="8"/><path d="M10 3v8l-5-4z"/><path d="M25 3v8l-5-4z"/><path d="M36 3v8l5-4z"/><path d="M51 3v8l5-4z"/><rect x="57" y="3" width="1.4" height="8"/></g></svg>
<div id="mtab" class="abs"></div><div id="mtabt" class="abs">模型</div>
<div id="stmsg" class="abs">拾取另一个标注元素或指定尺寸线位置:</div>
<div id="stright" class="abs"></div>
<div class="abs st mo" style="left:1061px;top:1000px">D Dim</div>
<div class="abs st mo" style="left:1192px;top:1000px">16.9537, 16.6593</div>
<div class="abs st" style="left:1458px">正交</div>
<div class="abs sbtn" style="left:1498px;width:46px"></div><div class="abs st" style="left:1506px">线宽</div>
<div class="abs sbtn" style="left:1546px;width:76px"></div><div class="abs st" style="left:1554px">动态输入</div>
<div class="abs st" style="left:1632px">导航</div>
<svg class="abs" style="left:1671px;top:1005px" width="8" height="5" viewBox="0 0 8 5"><path d="M0.5 0.5h6l-3 3.5z" fill="#444"/></svg>
<div id="start" class="abs"></div><div id="startt" class="abs">开始</div>
<div id="tbtn" class="abs"></div><div id="tbtnt" class="abs"><span class="sq" style="width:32px;transform:scaleX(.753)">CAXA</span>电子图<span class="mo">...</span></div>
<div id="tray" class="abs"></div>
<div id="clock" class="abs">10:24</div>
<svg class="abs" style="left:0;top:1020px" width="400" height="30" viewBox="0 1020 400 30">
<!-- windows flag -->
<g stroke-width=".4"><path d="M12.5 1028q3.500-2 7 0l-1.500 7q-3.500-2-7 0z" fill="#ee5a22" stroke="#b43a10"/><path d="M21 1029.500q3.500 2 7 0l-1.500 7q-3.500 2-7 0z" fill="#7cc82e" stroke="#4e9418"/><path d="M10.500 1036.500q3.500-2 7 0l-1.500 7q-3.500-2-7 0z" fill="#4a7ee8" stroke="#2c58b8"/><path d="M19 1038q3.500 2 7 0l-1.500 7q-3.500 2-7 0z" fill="#f6cc28" stroke="#c09a10"/></g>
<!-- IE -->
<text x="132.500" y="1041.500" text-anchor="middle" font-family="'Liberation Sans',sans-serif" font-weight="bold" font-style="italic" font-size="20" fill="#49b2ee" stroke="#2a86d8" stroke-width=".5">e</text>
<path d="M125.500 1041q-2-3 5-8.500t9.500-5" fill="none" stroke="#6ac4f6" stroke-width="1.400"/>
<!-- desktop -->
<path d="M151.500 1028l9.500-1.500l1 9.500l-8.500 1.500z" fill="#9fd4f8" stroke="#d8efff" stroke-width="1"/><path d="M154.500 1037.500h5l1.500 3.500h-8z" fill="#f2f2f6" stroke="#c8cce0" stroke-width=".6"/><ellipse cx="157" cy="1041" rx="4.500" ry="1.200" fill="#e6d8e0"/>
<!-- media -->
<path d="M173 1030l9-3v12l-9 3z" fill="#fff" stroke="#d8e8ff" stroke-width=".6"/><path d="M182 1027l3.500 1.500v11l-3.500-1z" fill="#2a74d8"/><path d="M175 1031.500l6-1.800v8.300l-6 1.800z" fill="#3a8ae4"/><path d="M180 1033l-3.500 2.500l3.500 1.500" fill="#111"/><circle cx="185" cy="1031.500" r="1.200" fill="#ff7a20"/>
<!-- chevrons -->
<path d="M201 1027.500l2.200 2.200l-2.200 2.200M205 1027.500l2.200 2.200l-2.200 2.200" fill="none" stroke="#9cc8ff" stroke-width="1.200"/>
<!-- caxa app icon -->
<rect x="229" y="1028" width="16" height="15.500" fill="#f4f6fa"/><circle cx="236.500" cy="1034.500" r="4.600" fill="#bfe0fa" stroke="#1a68c8" stroke-width="1.600"/><circle cx="236.500" cy="1034.500" r="1.600" fill="#fff"/><path d="M230.500 1029l11 11M243.500 1029.500l-13 13" stroke="#233a78" stroke-width="1"/><rect x="238" y="1037.500" width="7" height="6" fill="#1c1c28"/>
<text x="241.500" y="1043" text-anchor="middle" font-family="'Liberation Sans',sans-serif" font-weight="bold" font-size="6.500" fill="#fff">M</text>
</svg>
<svg class="abs" style="left:1510px;top:1020px" width="110" height="30" viewBox="1510 1020 110 30">
<!-- keyboard -->
<path d="M1523.500 1032.500q0-3 1.500-1.500t1.500 0t1.500 0t1.500 0t1.500 0t1.500 1.500" fill="none" stroke="#111" stroke-width="1"/>
<rect x="1520.500" y="1033" width="15" height="8" rx="1" fill="#fff" stroke="#111" stroke-width="1.200"/><path d="M1522.500 1035.500h11M1522.500 1037.500h11M1523.500 1039.300h9" stroke="#111" stroke-width="1" stroke-dasharray="1 .6"/>
<!-- restore + triangle -->
<rect x="1548.700" y="1026.200" width="5" height="3" fill="none" stroke="#fff" stroke-width="1.200"/><rect x="1546.700" y="1028.700" width="5" height="3" fill="#2560dc" stroke="#fff" stroke-width="1.200"/><path d="M1546.800 1039h5.600l-2.800 3z" fill="#fff"/>
<!-- round button -->
<defs><radialGradient id="rb" cx=".4" cy=".35" r=".7"><stop offset="0" stop-color="#6cc0ff"/><stop offset=".6" stop-color="#2a8cea"/><stop offset="1" stop-color="#1464c8"/></radialGradient></defs>
<circle cx="1571.300" cy="1035.300" r="8.400" fill="url(#rb)" stroke="#9ad0ff" stroke-width=".8"/>
<path d="M1573.500 1031l-4.500 4.300l4.500 4.300" fill="none" stroke="#fff" stroke-width="2.200"/>
<!-- speaker orange -->
<path d="M1583 1032.500h3.500l4.500-4.500v14l-4.500-4.500h-3.500z" fill="#e86a3a" stroke="#5a2410" stroke-width=".7"/><path d="M1592.500 1029.500q2.500 5.500 0 11M1595 1028q3.500 7 0 14" fill="none" stroke="#1a1a2a" stroke-width="1.300"/>
<!-- gray speaker -->
<defs><radialGradient id="gs" cx=".4" cy=".4" r=".6"><stop offset="0" stop-color="#d8d8d8"/><stop offset=".5" stop-color="#8e8e8e"/><stop offset="1" stop-color="#555"/></radialGradient></defs>
<circle cx="1606" cy="1033.800" r="5.600" fill="url(#gs)" stroke="#b0b0b0" stroke-width=".6"/><circle cx="1605.500" cy="1033.300" r="2" fill="#666"/>
<path d="M1610 1041.500q3.500-1.500 5-5M1612 1043q3-1.500 4.500-4.500" fill="none" stroke="#8cc0f4" stroke-width="1"/>
</svg>
<!--BOTTOMITEMS-->
</body>
</html>
